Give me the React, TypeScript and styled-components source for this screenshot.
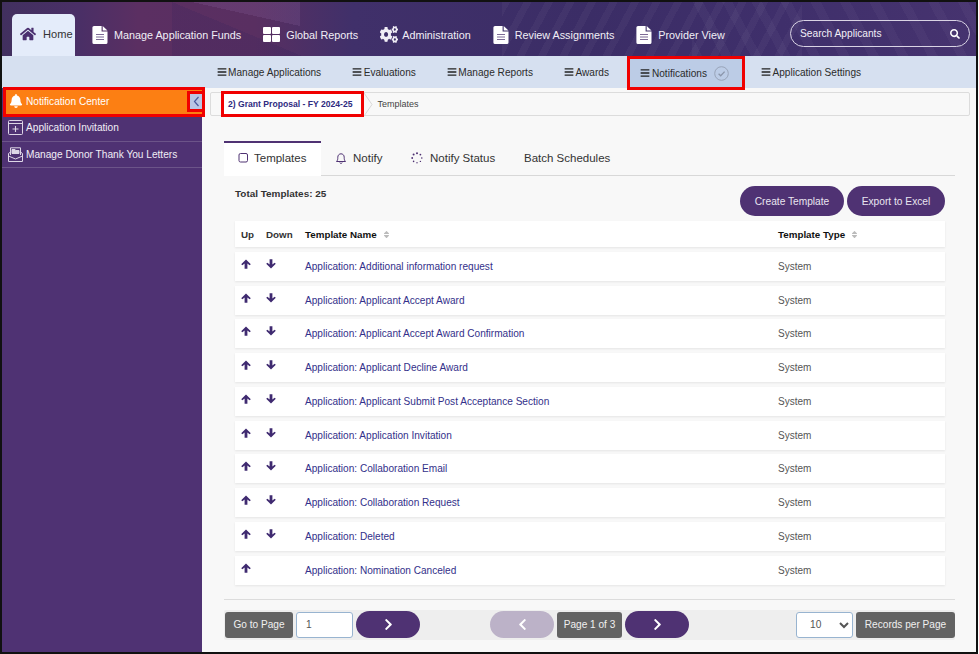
import styled, { createGlobalStyle } from "styled-components";
import {
  FaBars,
  FaBell,
  FaChevronLeft,
  FaChevronRight,
  FaCogs,
  FaHome,
  FaSearch,
  FaSort,
} from "react-icons/fa";

const GlobalStyle = createGlobalStyle`
  html, body {
    margin: 0;
    background: #fff;
    font-family: "Liberation Sans", Arial, sans-serif;
  }
`;

//Frame
const Frame = styled.div`
  box-sizing: border-box;
  width: 978px;
  height: 654px;
  border: 2px solid #111;
  display: flex;
  flex-direction: column;
  overflow: hidden;
  background: #f8f8f8;
`;

//Top bar
const TopBar = styled.header`
  height: 54px;
  flex: none;
  box-sizing: border-box;
  display: flex;
  align-items: flex-end;
  padding: 0 6px 0 10px;
  background:
    linear-gradient(to bottom left, rgba(140, 100, 160, 0.22) 50%, transparent 50%) 190px 0 / 108px 24px no-repeat,
    linear-gradient(to top right, rgba(40, 30, 90, 0.16) 50%, transparent 50%) 170px 0 / 130px 54px no-repeat,
    repeating-linear-gradient(118deg, rgba(255, 255, 255, 0.035) 0 7px, transparent 7px 19px) 500px 0 / 300px 54px no-repeat,
    repeating-linear-gradient(62deg, rgba(255, 255, 255, 0.03) 0 9px, transparent 9px 26px) 690px 0 / 286px 54px no-repeat,
    linear-gradient(90deg, #41305f 0, #4a2f66 8%, #5b2f62 14%, #592f61 26%, #40306a 36%, #3b2d66 60%, #3f2f6b 80%, #46336f 100%);
`;

const HomeTab = styled.a`
  width: 63px;
  height: 42px;
  box-sizing: border-box;
  flex: none;
  display: flex;
  align-items: center;
  gap: 7px;
  padding: 0 0 2px 8px;
  background: #e4ecfa;
  border-radius: 5px 5px 0 0;
  color: #333;
  font-size: 11.1px;

  svg {
    color: #4a2f6f;
    font-size: 16px;
  }
`;

const TopNav = styled.nav`
  display: flex;
  align-items: center;
  gap: 22px;
  height: 42px;
  margin-left: 17px;
  padding-bottom: 1px;
  box-sizing: border-box;
`;

const TopLink = styled.a<{ $gap?: number }>`
  display: flex;
  align-items: center;
  gap: ${(p) => p.$gap ?? 6}px;
  color: #f1eef6;
  font-size: 10.8px;
  white-space: nowrap;
`;

const CogsIcon = styled(FaCogs)`
  width: 18px;
  height: 17px;
`;

const SearchBox = styled.div`
  width: 180px;
  height: 27px;
  box-sizing: border-box;
  display: flex;
  align-items: center;
  margin: 0 0 9px auto;
  padding: 0 9px 0 9px;
  border: 1px solid #d9d3e4;
  border-radius: 14px;
  color: #fff;
  font-size: 10px;
`;

const SearchInput = styled.input`
  flex: 1;
  min-width: 0;
  padding: 0 0 1px;
  border: 0;
  outline: 0;
  background: transparent;
  color: #fff;
  font: 10.2px "Liberation Sans", Arial, sans-serif;

  &::placeholder {
    color: #f2eff7;
    opacity: 1;
  }
`;

//Sub nav
const SubNav = styled.nav`
  height: 32px;
  flex: none;
  display: flex;
  align-items: stretch;
  padding-left: 199px;
  background: #d6e0f0;
`;

const SubLink = styled.a<{ $active?: boolean }>`
  display: flex;
  align-items: center;
  gap: 1.5px;
  box-sizing: border-box;
  padding: 0 ${(p) => (p.$active ? "13px 0 10px" : "15.5px")};
  margin-left: ${(p) => (p.$active ? "3px" : "0")};
  color: #2b2b2b;
  font-size: 10.1px;
  white-space: nowrap;
  background: ${(p) => (p.$active ? "#bccce6" : "transparent")};
  border: ${(p) => (p.$active ? "3px solid #f00000" : "0")};
  height: ${(p) => (p.$active ? "34px" : "auto")};

  svg.bars {
    font-size: 10px;
    color: #222;
  }
`;

const CheckMark = styled.svg`
  width: 15px;
  height: 15px;
  margin-left: 6px;
`;

//Body
const Body = styled.div`
  flex: 1;
  min-height: 0;
  display: flex;
`;

const Sidebar = styled.aside`
  width: 200px;
  flex: none;
  background: #4f3273;
`;

const SideActive = styled.a`
  position: relative;
  z-index: 1;
  height: 30px;
  width: 202px;
  margin: -1px 0 -2px 1px;
  box-sizing: border-box;
  display: flex;
  align-items: center;
  gap: 3px;
  padding: 0 0 2px 3px;
  background: #fc7f13;
  border: 3px solid #f00000;
  color: #fff;
  font-size: 10.15px;

  > svg {
    font-size: 14px;
  }
`;

const Collapse = styled.button`
  margin-left: auto;
  margin-right: -3px;
  width: 18px;
  height: 21px;
  padding: 0;
  display: flex;
  align-items: center;
  justify-content: center;
  background: #b9c6e4;
  border: 3px solid #f00000;
`;

const SideLink = styled.a`
  height: 26.5px;
  box-sizing: border-box;
  display: flex;
  align-items: center;
  gap: 3px;
  padding-left: 6px;
  border-bottom: 1px solid #6c5489;
  color: #f1eef6;
  font-size: 10.15px;
`;

const Main = styled.main`
  flex: 1;
  min-width: 0;
  padding: 4px 6px 0 8px;
`;

const Crumbs = styled.div`
  height: 24px;
  box-sizing: border-box;
  display: flex;
  align-items: center;
  background: #f8f8f8;
  border: 1px solid #dcdcdc;
  border-radius: 2px;
  font-size: 9px;
  color: #444;
  padding-left: 10px;
`;

const CrumbActive = styled.a`
  height: 26px;
  box-sizing: border-box;
  display: flex;
  align-items: center;
  padding: 0 8px 0 4px;
  background: #fff;
  border: 3px solid #f00000;
  color: #2e2a80;
  font-weight: bold;
  font-size: 8.6px;
  white-space: nowrap;
`;

const CrumbArrow = styled.svg`
  width: 9px;
  height: 23px;
  margin-right: 5px;
`;

const Content = styled.div`
  width: 731px;
  margin-left: 14px;
`;

//Tabs
const Tabs = styled.div`
  display: flex;
  height: 34px;
  margin-top: 25px;
  border-bottom: 1px solid #d8d8d8;
`;

const Tab = styled.a<{ $active?: boolean; $w: number; $gap?: number }>`
  width: ${(p) => p.$w}px;
  box-sizing: border-box;
  display: flex;
  align-items: center;
  gap: ${(p) => p.$gap ?? 6}px;
  padding: 0 0 3px 14px;
  color: #333;
  font-size: 11.5px;
  background: ${(p) => (p.$active ? "#fff" : "transparent")};
  border-top: 2px solid ${(p) => (p.$active ? "#4f3273" : "transparent")};
  height: 35px;
`;

const TabIcon = styled.svg`
  width: 12px;
  height: 12px;
  flex: none;
`;

//Toolbar above the table
const Toolbar = styled.div`
  display: flex;
  justify-content: space-between;
  margin: 10px 10px 5px 11px;
`;

const Total = styled.div`
  font-size: 9.95px;
  font-weight: bold;
  color: #333;
  margin-top: 2px;
`;

const Actions = styled.div`
  display: flex;
  gap: 3px;
`;

const PillButton = styled.button<{ $w: number }>`
  width: ${(p) => p.$w}px;
  height: 30px;
  padding: 0;
  border: 0;
  border-radius: 15px;
  background: #4f3273;
  color: #e9e5f0;
  font: 10.2px "Liberation Sans", Arial, sans-serif;
`;

//Table
const Table = styled.div`
  display: flex;
  flex-direction: column;
  gap: 4.75px;
  margin: 0 10px 0 11px;
`;

const Row = styled.div<{ $head?: boolean }>`
  display: grid;
  grid-template-columns: 25px 39px 473px 1fr;
  height: ${(p) => (p.$head ? "26px" : "29px")};
  box-sizing: border-box;
  padding-left: 6px;
  align-items: center;
  background: #fff;
  box-shadow: 0 1px 2px rgba(0, 0, 0, 0.08);
  font-size: 10px;
  font-weight: ${(p) => (p.$head ? "bold" : "normal")};
  color: ${(p) => (p.$head ? "#333" : "#555")};
`;

const Th = styled.span<{ $strong?: boolean }>`
  color: ${(p) => (p.$strong ? "#111" : "#333")};
  font-size: 9.8px;
  display: flex;
  align-items: center;
  gap: 5px;

  svg {
    color: #bbb;
    font-size: 9px;
  }
`;

const ArrowCell = styled.span`
  align-self: start;
  padding-top: 7px;
  height: 10px;
`;

const TemplateLink = styled.a`
  color: #33308a;
  font-size: 10.08px;
`;

//Pager
const Divider = styled.div`
  height: 1px;
  margin-top: 14px;
  background: #dcdcdc;
`;

const Pager = styled.div`
  height: 30px;
  margin-top: 10px;
  box-sizing: border-box;
  display: flex;
  align-items: center;
  padding: 0 0 0 1px;
  background: #eeeeee;
  border-radius: 2px;
`;

const Grey = styled.span<{ $w: number }>`
  width: ${(p) => p.$w}px;
  height: 26px;
  flex: none;
  display: flex;
  align-items: center;
  justify-content: center;
  background: #636363;
  border-radius: 3px;
  color: #f0f0f0;
  font-size: 10.1px;
`;

const PageInput = styled.input`
  width: 57px;
  height: 26px;
  box-sizing: border-box;
  margin: 0 3px;
  padding: 0 0 0 9px;
  background: #fff;
  border: 1px solid #98b4d0;
  border-radius: 3px;
  color: #555;
  font: 10.2px "Liberation Sans", Arial, sans-serif;
`;

const PageSelect = styled.select`
  width: 57px;
  height: 26px;
  box-sizing: border-box;
  margin-right: 3px;
  padding: 0 0 0 9px;
  background: #fff;
  border: 1px solid #98b4d0;
  border-radius: 3px;
  color: #555;
  font: 10.2px "Liberation Sans", Arial, sans-serif;
`;

const ArrowButton = styled.button<{ $off?: boolean }>`
  width: 64px;
  height: 27px;
  flex: none;
  padding: 0;
  display: flex;
  align-items: center;
  justify-content: center;
  border: 0;
  border-radius: 14px;
  background: ${(p) => (p.$off ? "#bcb2c8" : "#4f3273")};
  color: #fff;
  font-size: 13px;
`;

const PagerMiddle = styled.div`
  display: flex;
  align-items: center;
  gap: 3px;
  margin-left: 70px;
`;

const PagerRight = styled.div`
  display: flex;
  align-items: center;
  margin-left: auto;
`;

//Icons
const DocIcon = () => (
  <svg width="16" height="18" viewBox="0 0 16 18">
    <path
      d="M2 0H9.6V5.6H15.5V16.4A1.6 1.6 0 0 1 13.9 18H2A1.6 1.6 0 0 1 .4 16.4V1.6A1.6 1.6 0 0 1 2 0Z"
      fill="#fff"
    />
    <path d="M10.7 0L15.5 4.5H10.7Z" fill="#fff" />
    <path d="M4 8.5H12M4 11H12M4 13.5H12" stroke="#7d6a96" strokeWidth="1" />
  </svg>
);

const GridIcon = () => (
  <svg width="17" height="15" viewBox="0 0 17 15" fill="#fff">
    <rect x="0" y="0" width="8" height="7" rx="1" />
    <rect x="9" y="0" width="8" height="7" rx="1" />
    <rect x="0" y="8" width="8" height="7" rx="1" />
    <rect x="9" y="8" width="8" height="7" rx="1" />
  </svg>
);

const InviteIcon = () => (
  <svg width="15" height="15" viewBox="0 0 15 15" fill="none" stroke="#ddd6e6">
    <rect x=".5" y=".5" width="14" height="14" rx="1" />
    <path d="M.5 3.5H14.5" />
    <path d="M7.5 6V12M4.5 9H10.5" strokeWidth="1.1" />
  </svg>
);

const DonorIcon = () => (
  <svg width="15" height="15" viewBox="0 0 15 15" fill="none" stroke="#ddd6e6">
    <path d="M.5 6.5V14.5H14.5V6.5L12.5 5" />
    <path d="M.5 6.5L2.5 5M.5 9L7.5 12L14.5 9" />
    <path d="M2.5 8V.8H12.5V8" />
    <path d="M4 2.5H7L8 3.5H11V6.5H4Z" fill="#ddd6e6" />
  </svg>
);

const UpArrow = () => (
  <svg width="10" height="10" viewBox="0 0 10 10" fill="#3f2a70">
    <path d="M5 .5L9.8 5.2L8.6 6.3L6.4 4.4V9.8H3.6V4.4L1.4 6.3L.2 5.2Z" />
  </svg>
);

const DownArrow = () => (
  <svg width="10" height="10" viewBox="0 0 10 10" fill="#3f2a70">
    <path d="M5 9.5L9.8 4.8L8.6 3.7L6.4 5.6V.2H3.6V5.6L1.4 3.7L.2 4.8Z" />
  </svg>
);

const Rows: [string, boolean][] = [
  ["Application: Additional information request", true],
  ["Application: Applicant Accept Award", true],
  ["Application: Applicant Accept Award Confirmation", true],
  ["Application: Applicant Decline Award", true],
  ["Application: Applicant Submit Post Acceptance Section", true],
  ["Application: Application Invitation", true],
  ["Application: Collaboration Email", true],
  ["Application: Collaboration Request", true],
  ["Application: Deleted", true],
  ["Application: Nomination Canceled", false],
];

const subLinks = ["Manage Applications", "Evaluations", "Manage Reports", "Awards"];

export default function App() {
  return (
    <Frame>
      <GlobalStyle />
      <TopBar>
        <HomeTab>
          <FaHome />
          Home
        </HomeTab>
        <TopNav>
          <TopLink>
            <DocIcon />
            Manage Application Funds
          </TopLink>
          <TopLink>
            <GridIcon />
            Global Reports
          </TopLink>
          <TopLink $gap={4}>
            <CogsIcon preserveAspectRatio="none" />
            Administration
          </TopLink>
          <TopLink>
            <DocIcon />
            Review Assignments
          </TopLink>
          <TopLink>
            <DocIcon />
            Provider View
          </TopLink>
        </TopNav>
        <SearchBox>
          <SearchInput placeholder="Search Applicants" />
          <FaSearch />
        </SearchBox>
      </TopBar>

      <SubNav>
        {subLinks.map((s) => (
          <SubLink key={s}>
            <FaBars className="bars" />
            {s}
          </SubLink>
        ))}
        <SubLink $active>
          <FaBars className="bars" />
          Notifications
          <CheckMark viewBox="0 0 15 15" fill="none">
            <circle cx="7.5" cy="7.5" r="6.8" stroke="#98a3b8" />
            <path d="M4.6 7.8L6.7 9.8L10.6 5.6" stroke="#8b96ab" strokeWidth="1.3" />
          </CheckMark>
        </SubLink>
        <SubLink>
          <FaBars className="bars" />
          Application Settings
        </SubLink>
      </SubNav>

      <Body>
        <Sidebar>
          <SideActive>
            <FaBell />
            Notification Center
            <Collapse>
              <svg width="7" height="11" viewBox="0 0 7 11" fill="none">
                <path d="M5.5 1L1.5 5.5L5.5 10" stroke="#4a5a9c" strokeWidth="1.2" />
              </svg>
            </Collapse>
          </SideActive>
          <SideLink>
            <InviteIcon />
            Application Invitation
          </SideLink>
          <SideLink>
            <DonorIcon />
            Manage Donor Thank You Letters
          </SideLink>
        </Sidebar>

        <Main>
          <Crumbs>
            <CrumbActive>2) Grant Proposal - FY 2024-25</CrumbActive>
            <CrumbArrow viewBox="0 0 9 23" fill="none">
              <path d="M0 0L8 11.5L0 23" stroke="#d8d8d8" />
            </CrumbArrow>
            Templates
          </Crumbs>

          <Content>
            <Tabs>
              <Tab $active $w={97} $gap={4}>
                <TabIcon viewBox="0 0 12 12" fill="none">
                  <rect x="1" y="1.5" width="8.5" height="8.5" rx="1.5" stroke="#4f3273" />
                </TabIcon>
                Templates
              </Tab>
              <Tab $w={76}>
                <TabIcon viewBox="0 0 12 12" fill="none" stroke="#4f3273">
                  <path d="M1.5 9.5C2.6 8.4 2.8 7.4 2.8 5.2C2.8 3.2 4.2 1.8 6 1.8C7.8 1.8 9.2 3.2 9.2 5.2C9.2 7.4 9.4 8.4 10.5 9.5Z" />
                  <path d="M4.8 10.6A1.3 1.3 0 0 0 7.2 10.6" />
                </TabIcon>
                Notify
              </Tab>
              <Tab $w={113} $gap={7}>
                <TabIcon viewBox="0 0 12 12" fill="#4f3273">
                  <circle cx="6" cy="1.2" r="1" />
                  <circle cx="9.4" cy="2.6" r=".9" />
                  <circle cx="10.8" cy="6" r=".8" />
                  <circle cx="9.4" cy="9.4" r=".7" />
                  <circle cx="6" cy="10.8" r=".7" />
                  <circle cx="2.6" cy="9.4" r=".8" />
                  <circle cx="1.2" cy="6" r=".9" />
                  <circle cx="2.6" cy="2.6" r="1" />
                </TabIcon>
                Notify Status
              </Tab>
              <Tab $w={110}>Batch Schedules</Tab>
            </Tabs>

            <Toolbar>
              <Total>Total Templates: 25</Total>
              <Actions>
                <PillButton $w={104}>Create Template</PillButton>
                <PillButton $w={98}>Export to Excel</PillButton>
              </Actions>
            </Toolbar>

            <Table>
              <Row $head>
                <Th>Up</Th>
                <Th>Down</Th>
                <Th $strong>
                  Template Name <FaSort />
                </Th>
                <Th $strong>
                  Template Type <FaSort />
                </Th>
              </Row>
              {Rows.map(([name, down]) => (
                <Row key={name}>
                  <ArrowCell>
                    <UpArrow />
                  </ArrowCell>
                  <ArrowCell>{down && <DownArrow />}</ArrowCell>
                  <TemplateLink>{name}</TemplateLink>
                  <span>System</span>
                </Row>
              ))}
            </Table>

            <Divider />
            <Pager>
              <Grey $w={68}>Go to Page</Grey>
              <PageInput defaultValue="1" />
              <ArrowButton>
                <FaChevronRight />
              </ArrowButton>
              <PagerMiddle>
                <ArrowButton $off>
                  <FaChevronLeft />
                </ArrowButton>
                <Grey $w={65}>Page 1 of 3</Grey>
                <ArrowButton>
                  <FaChevronRight />
                </ArrowButton>
              </PagerMiddle>
              <PagerRight>
                <PageSelect defaultValue="10">
                  <option value="10">10</option>
                  <option value="25">25</option>
                </PageSelect>
                <Grey $w={99}>Records per Page</Grey>
              </PagerRight>
            </Pager>
          </Content>
        </Main>
      </Body>
    </Frame>
  );
}
